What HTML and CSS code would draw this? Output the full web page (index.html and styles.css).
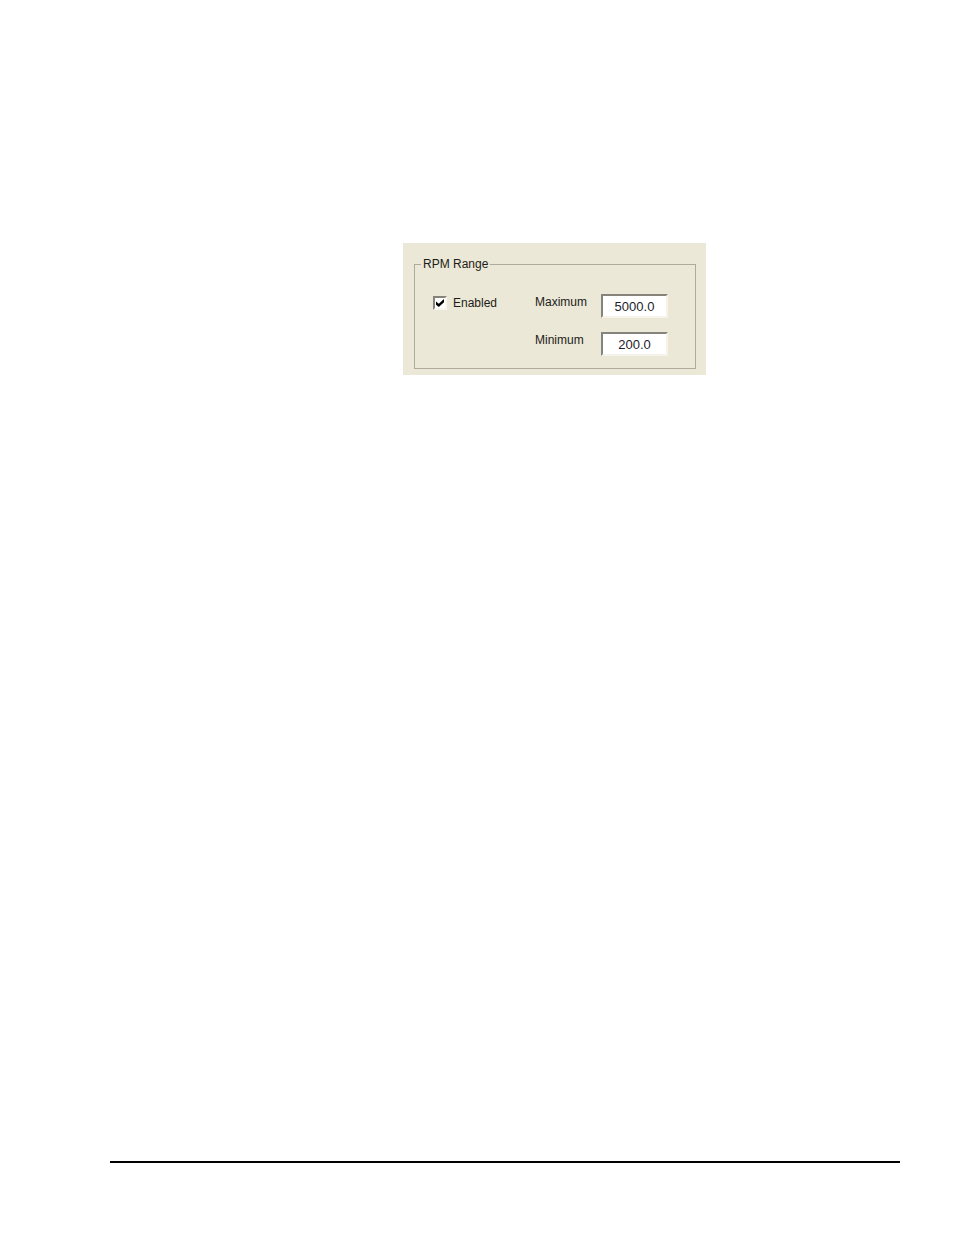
FILE: index.html
```html
<!DOCTYPE html>
<html lang="en">
<head>
    <meta charset="UTF-8">
    <meta name="viewport" content="width=device-width, initial-scale=1.0">
    <title>RPM Range</title>
    <link rel="stylesheet" href="styles.css">
</head>
<body>
    <main class="page">
        <form class="panel">
            <fieldset class="group">
                <legend>RPM Range</legend>
                <div class="fields">
                    <label class="check" for="enabled">
                        <input type="checkbox" id="enabled" checked>
                        Enabled
                    </label>
                    <label for="maximum">Maximum</label>
                    <input class="value" type="text" id="maximum" value="5000.0">
                    <label class="second-row" for="minimum">Minimum</label>
                    <input class="value" type="text" id="minimum" value="200.0">
                </div>
            </fieldset>
        </form>
        <hr class="rule">
    </main>
</body>
</html>
```

FILE: styles.css
```css
* {
    box-sizing: border-box;
}
body {
    margin: 0;
    background: #fff;
    color: #1c1c18;
    font-family: "Liberation Sans", Arial, sans-serif;
    font-size: 12px;
    line-height: 16px;
}
.page {
    display: flex;
    flex-direction: column;
    min-height: 100vh;
    padding: 243px 54px 72px 110px;
}
.panel {
    align-self: flex-start;
    margin-left: 293px;
    padding: 14px 10px 6px 11px;
    background: #ebe8d7;
}
.group {
    margin: 0;
    padding: 23px 27px 12px 18px;
    border: 1px solid #aeab9c;
}
.group legend {
    margin-left: -12px;
    padding: 0 2px;
    line-height: 14px;
}
.fields {
    display: grid;
    grid-template-columns: 102px 66px 67px;
    row-gap: 14px;
    align-items: start;
}
.second-row {
    grid-column: 2;
}
.check {
    display: flex;
    align-items: center;
    gap: 6px;
    line-height: 18px;
}
.check input {
    appearance: none;
    display: grid;
    place-items: center;
    width: 14px;
    height: 14px;
    margin: 0;
    border: 2px solid;
    border-color: #85837a #f8f6ee #f8f6ee #85837a;
    background: #fff;
}
.check input:checked::before {
    content: "";
    width: 8px;
    height: 8px;
    background: #000;
    clip-path: polygon(0 30%, 35% 58%, 100% 0, 100% 42%, 35% 100%, 0 72%);
}
.value {
    width: 100%;
    height: 24px;
    padding: 0;
    border: 2px solid;
    border-color: #85837a #f6f4ea #f6f4ea #85837a;
    border-radius: 0;
    background: #fff;
    color: #1c1c2c;
    font: inherit;
    font-size: 13px;
    text-align: center;
}
.rule {
    width: 100%;
    margin: auto 0 0;
    border: 0;
    border-top: 2px solid #000;
}
```
